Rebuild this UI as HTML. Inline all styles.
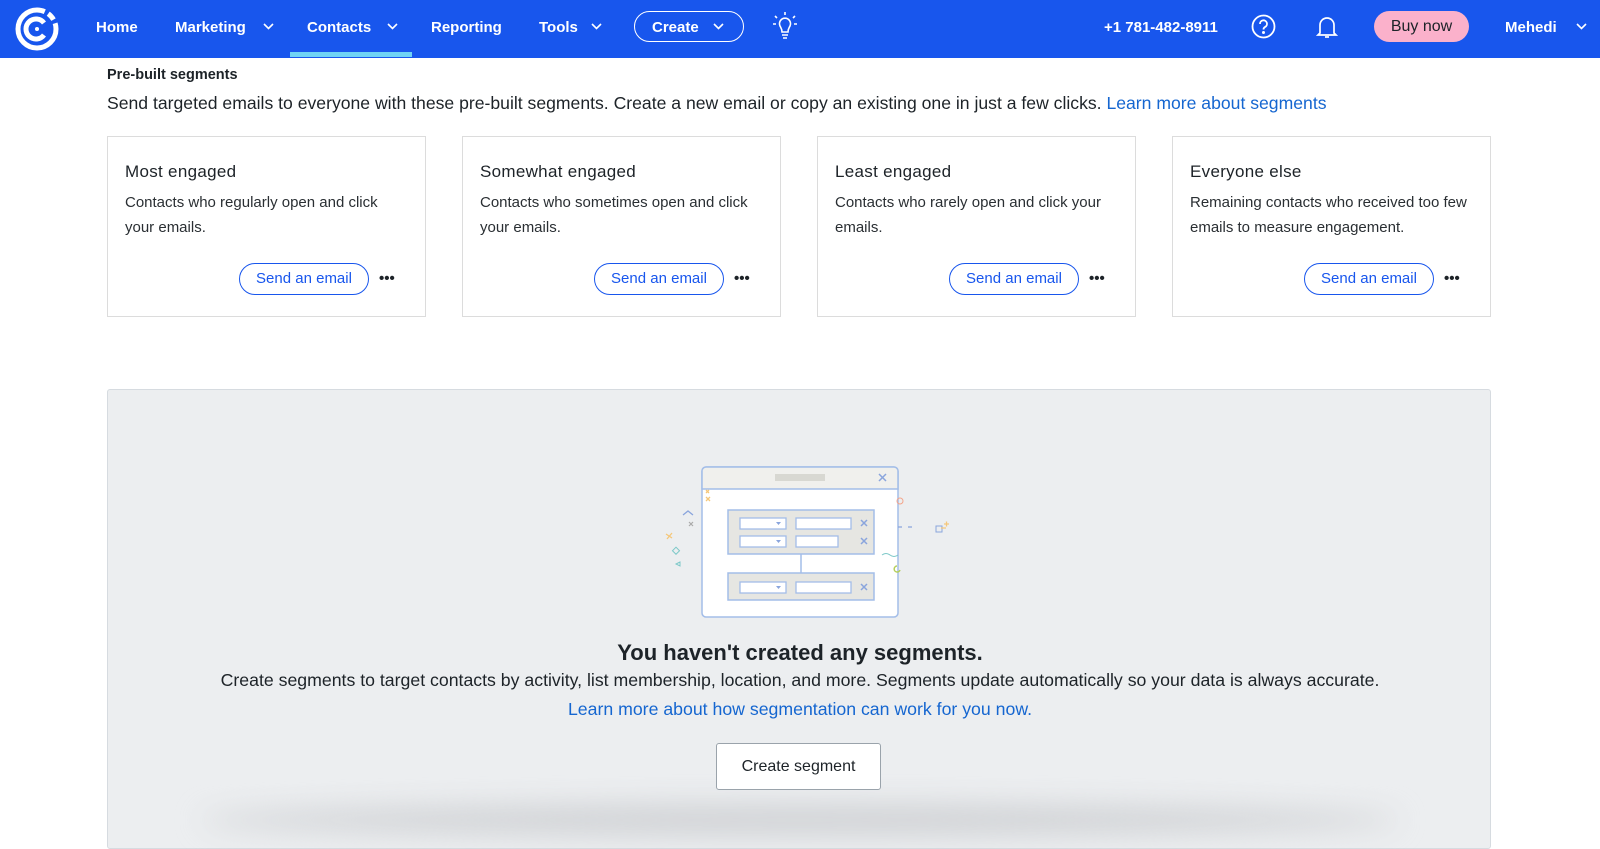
<!DOCTYPE html>
<html><head><meta charset="utf-8"><style>
*{box-sizing:border-box;margin:0;padding:0}
body{width:1600px;height:809px;overflow:hidden;background:#fff;font-family:"Liberation Sans",sans-serif;color:#1d2328;position:relative}
.nav{position:absolute;left:0;top:0;width:1600px;height:58px;background:#1856ed;color:#fff;font-size:15px;font-weight:bold}
.nav span{position:absolute;top:19px;white-space:nowrap}
.chev{position:absolute;top:20px}
.ul{position:absolute;left:290px;top:52px;width:122px;height:5px;background:#6fd3f5}
.create{position:absolute;left:634px;top:11px;width:110px;height:31px;border:1.5px solid #fff;border-radius:16px}
.buy{position:absolute;left:1374px;top:11px;width:95px;height:31px;background:#fbb1cb;border-radius:16px;color:#1d2328;font-weight:normal;font-size:16px;text-align:center;line-height:31px}
h4{position:absolute;left:107px;top:67px;font-size:14.5px;font-weight:bold}
.sub{position:absolute;left:107px;top:93px;font-size:17.6px;color:#1d2328;white-space:nowrap}
a{color:#1566d0;text-decoration:none}
.card{position:absolute;top:136px;width:319px;height:181px;border:1px solid #dcdcdc;background:#fff}
.card b{position:absolute;left:17px;top:25px;font-size:17px;font-weight:normal;color:#1d2328;letter-spacing:.3px}
.card p{position:absolute;left:17px;top:53px;width:280px;font-size:15px;line-height:25px;color:#2a2f33}
.btn{position:absolute;left:131px;top:126px;width:130px;height:32px;border:1px solid #1856ed;border-radius:16px;color:#1856ed;font-size:15px;text-align:center;line-height:30px}
.dots{position:absolute;left:271px;top:133px;font-size:15px;font-weight:bold;letter-spacing:0px}
.panel{position:absolute;left:107px;top:389px;width:1384px;height:460px;background:#eceef0;border:1px solid #d6dbe0;border-radius:3px}
.shadow{position:absolute;left:200px;top:805px;width:1200px;height:30px;background:#cfd1d4;filter:blur(14px);border-radius:50%}
.h2{position:absolute;left:0;width:1600px;top:640px;text-align:center;font-size:22px;font-weight:bold}
.t{position:absolute;left:0;width:1600px;text-align:center;font-size:17.7px;white-space:nowrap}
.cbtn{position:absolute;left:716px;top:743px;width:165px;height:47px;background:#fff;border:1px solid #9aa3ab;border-radius:3px;font-size:16px;text-align:center;line-height:45px}
</style></head><body>
<div class="nav">
<svg style="position:absolute;left:14px;top:6px" width="46" height="46" viewBox="0 0 46 46" fill="none" stroke="#fff" stroke-width="5"><path d="M23 4A19 19 0 1 0 42 23"/><path d="M23 4A19 19 0 0 1 42 23" stroke-dasharray="8 4"/><path d="M30 17A10 10 0 1 0 30 29"/><circle cx="23" cy="23" r="2" fill="#fff" stroke="none"/></svg>
<span style="left:96px">Home</span>
<span style="left:175px">Marketing</span><svg class="chev" style="left:262px" width="13" height="13" viewBox="0 0 13 13"><path d="M2 4l4.5 4.5L11 4" stroke="#fff" stroke-width="1.6" fill="none"/></svg>
<span style="left:307px">Contacts</span><svg class="chev" style="left:386px" width="13" height="13" viewBox="0 0 13 13"><path d="M2 4l4.5 4.5L11 4" stroke="#fff" stroke-width="1.6" fill="none"/></svg>
<div class="ul"></div>
<span style="left:431px">Reporting</span>
<span style="left:539px">Tools</span><svg class="chev" style="left:590px" width="13" height="13" viewBox="0 0 13 13"><path d="M2 4l4.5 4.5L11 4" stroke="#fff" stroke-width="1.6" fill="none"/></svg>
<div class="create"></div><span style="left:652px">Create</span><svg class="chev" style="left:712px" width="13" height="13" viewBox="0 0 13 13"><path d="M2 4l4.5 4.5L11 4" stroke="#fff" stroke-width="1.6" fill="none"/></svg>
<svg style="position:absolute;left:772px;top:11px" width="26" height="30" viewBox="0 0 26 30" fill="none" stroke="#fff" stroke-width="1.6"><path d="M13 1v3M3 5l2 2M23 5l-2 2M1 13h3M22 13h3"/><path d="M8 15a5.5 5.5 0 1 1 10 0c-1 2-2 3-2 6h-6c0-3-1-4-2-6z"/><path d="M10 24h6M11 27h4"/></svg>
<span style="left:1104px">+1 781-482-8911</span>
<svg style="position:absolute;left:1251px;top:14px" width="25" height="25" viewBox="0 0 25 25" fill="none" stroke="#fff" stroke-width="1.8"><circle cx="12.5" cy="12.5" r="11"/><path d="M9 10a3.5 3.5 0 1 1 5 3c-1 .6-1.5 1.2-1.5 2.5"/><circle cx="12.5" cy="18.5" r=".6" fill="#fff"/></svg>
<svg style="position:absolute;left:1316px;top:14px" width="22" height="26" viewBox="0 0 22 26" fill="none" stroke="#fff" stroke-width="1.7"><path d="M4 19V11a7 7 0 0 1 14 0v8l2 2H2z"/><path d="M9 23h4"/></svg>
<div class="buy">Buy now</div>
<span style="left:1505px">Mehedi</span><svg class="chev" style="left:1575px" width="13" height="13" viewBox="0 0 13 13"><path d="M2 4l4.5 4.5L11 4" stroke="#fff" stroke-width="1.6" fill="none"/></svg>
</div>
<h4>Pre-built segments</h4>
<div class="sub">Send targeted emails to everyone with these pre-built segments. Create a new email or copy an existing one in just a few clicks. <a>Learn more about segments</a></div>
<div class="card" style="left:107px"><b>Most engaged</b><p>Contacts who regularly open and click your emails.</p><div class="btn">Send an email</div><div class="dots">•••</div></div>
<div class="card" style="left:462px"><b>Somewhat engaged</b><p>Contacts who sometimes open and click your emails.</p><div class="btn">Send an email</div><div class="dots">•••</div></div>
<div class="card" style="left:817px"><b>Least engaged</b><p>Contacts who rarely open and click your emails.</p><div class="btn">Send an email</div><div class="dots">•••</div></div>
<div class="card" style="left:1172px"><b>Everyone else</b><p>Remaining contacts who received too few emails to measure engagement.</p><div class="btn">Send an email</div><div class="dots">•••</div></div>
<div class="panel"></div>
<div class="shadow"></div>
<svg style="position:absolute;left:650px;top:460px" width="300" height="165" viewBox="0 0 300 165" fill="none">
<rect x="52" y="7" width="196" height="150" rx="4" fill="#fff" stroke="#a3bde8" stroke-width="1.5"/>
<path d="M52 11a4 4 0 0 1 4-4h188a4 4 0 0 1 4 4v18H52z" fill="#f0f0ed" stroke="#a3bde8" stroke-width="1.5"/>
<rect x="125" y="14" width="50" height="7" fill="#d8d8d2"/>
<path d="M229 14l7 7M236 14l-7 7" stroke="#8aa5dd" stroke-width="1.5"/>
<rect x="78" y="50" width="146" height="44" fill="#e6e6e2" stroke="#a3bde8" stroke-width="1.5"/>
<rect x="78" y="113" width="146" height="27" fill="#e6e6e2" stroke="#a3bde8" stroke-width="1.5"/>
<path d="M151 94v19" stroke="#a3bde8" stroke-width="1.5"/>
<g fill="#fff" stroke="#a3bde8" stroke-width="1.3"><rect x="90" y="58" width="46" height="11"/><rect x="146" y="58" width="55" height="11"/><rect x="90" y="76" width="46" height="11"/><rect x="146" y="76" width="42" height="11"/><rect x="90" y="122" width="46" height="11"/><rect x="146" y="122" width="55" height="11"/></g>
<g fill="#8aa5dd"><path d="M126 62h5l-2.5 3zM126 80h5l-2.5 3zM126 126h5l-2.5 3z"/></g>
<g stroke="#8aa5dd" stroke-width="1.5"><path d="M211 60l6 6M217 60l-6 6M211 78l6 6M217 78l-6 6M211 124l6 6M217 124l-6 6"/></g>
<path d="M33 55l5-4 5 4" stroke="#8aa5dd" stroke-width="1.3"/>
<circle cx="250" cy="41" r="3" stroke="#f4a48a"/>
<path d="M248 67h4M258 67h4" stroke="#8aa5dd" stroke-width="1.3"/>
<rect x="286" y="66" width="6" height="6" stroke="#8aa5dd"/>
<path d="M16 74l6 4M22 73l-5 6M56 30l3 3M59 30l-3 3M291 68h5" stroke="#f5c77a" stroke-width="1.3"/>
<path d="M294 64h5M296.5 61.5v5" stroke="#f5c77a" stroke-width="1.3"/>
<path d="M56 37l4 4M60 37l-4 4" stroke="#f5c77a" stroke-width="1.3"/>
<path d="M39 62l4 4M43 62l-4 4" stroke="#aaa" stroke-width="1.2"/>
<rect x="24" y="88" width="5" height="5" stroke="#7cc8c8" transform="rotate(45 26 90)"/>
<path d="M30 102l-4 2 4 2z" stroke="#7cc8c8"/>
<path d="M232 95q4-3 8 0t8 0" stroke="#7cc8c8"/>
<path d="M247 106a3 3 0 1 0 3 4" stroke="#b5cf5a" stroke-width="1.5"/>
</svg>
<div class="h2">You haven't created any segments.</div>
<div class="t" style="top:670px">Create segments to target contacts by activity, list membership, location, and more. Segments update automatically so your data is always accurate.</div>
<div class="t" style="top:699px"><a>Learn more about how segmentation can work for you now.</a></div>
<div class="cbtn">Create segment</div>
</body></html>
